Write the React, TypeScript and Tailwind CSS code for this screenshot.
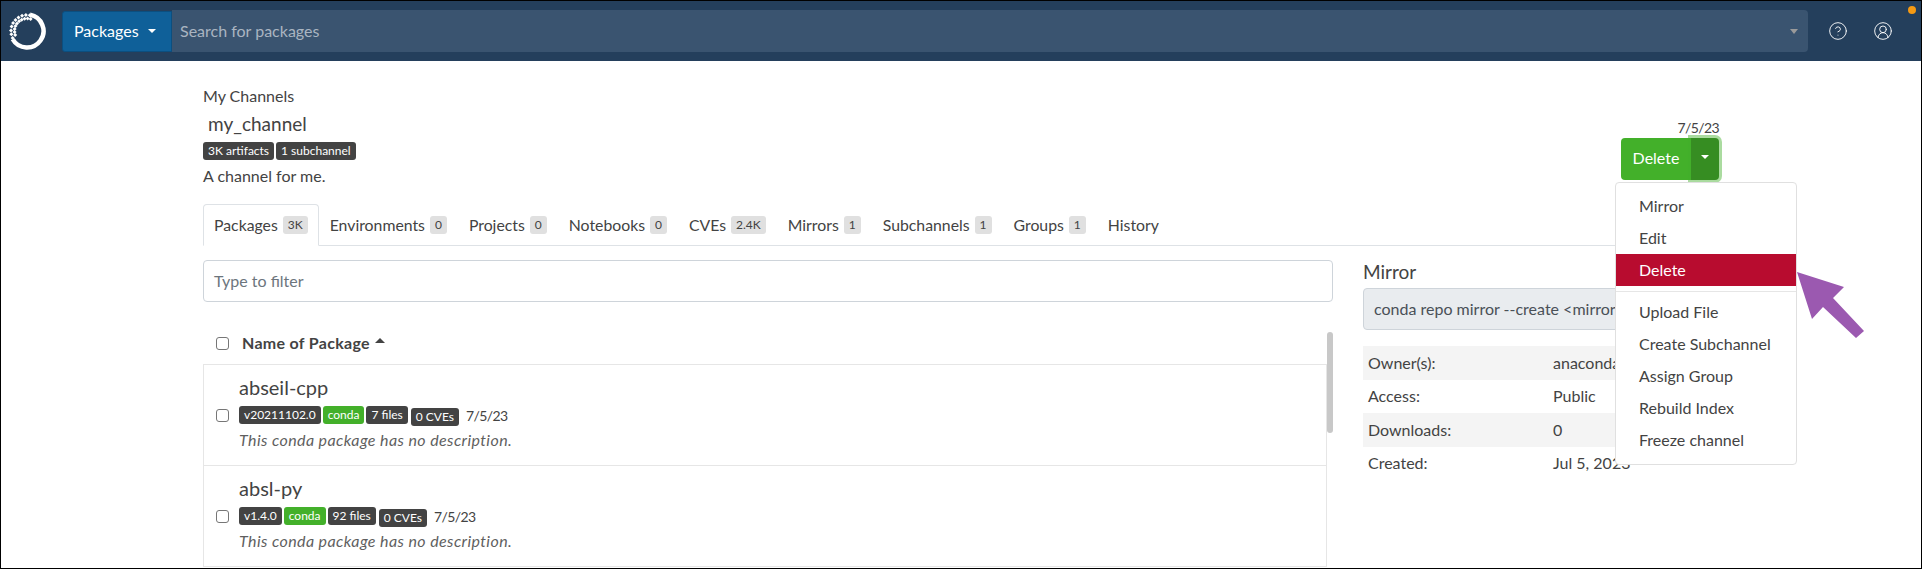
import { CircleHelp, CircleUserRound } from "lucide-react";

const tabs = [
  { label: "Packages", count: "3K" },
  { label: "Environments", count: "0" },
  { label: "Projects", count: "0" },
  { label: "Notebooks", count: "0" },
  { label: "CVEs", count: "2.4K" },
  { label: "Mirrors", count: "1" },
  { label: "Subchannels", count: "1" },
  { label: "Groups", count: "1" },
  { label: "History" },
];

const packages = [
  { name: "abseil-cpp", version: "v20211102.0", files: "7 files" },
  { name: "absl-py", version: "v1.4.0", files: "92 files" },
];

const details = [
  ["Owner(s):", "anaconda"],
  ["Access:", "Public"],
  ["Downloads:", "0"],
  ["Created:", "Jul 5, 2023"],
];

function Caret({ className }: { className: string }) {
  return <span className={`inline-block h-0 w-0 border-x-[4px] border-x-transparent ${className}`} />;
}

function Badge({ children, green }: { children: React.ReactNode; green?: boolean }) {
  return (
    <span
      className={`inline-flex h-[18px] items-center rounded-[3px] px-[5px] text-[12px] leading-none text-white ${
        green ? "bg-[#43b02a]" : "bg-[#434343]"
      }`}
    >
      {children}
    </span>
  );
}

function Check() {
  return <span className="block h-[13px] w-[13px] shrink-0 rounded-[3px] border border-[#767676] bg-white" />;
}

// ring with a netted section on the upper left
function Logo() {
  const diamonds: [number, number][] = [];
  for (let a = 154; a <= 292; a += 14) {
    const rad = (a * Math.PI) / 180;
    diamonds.push([19 + 16 * Math.cos(rad), 19 + 16 * Math.sin(rad)]);
    const rad2 = ((a + 7) * Math.PI) / 180;
    diamonds.push([19 + 12.5 * Math.cos(rad2), 19 + 12.5 * Math.sin(rad2)]);
  }
  return (
    <svg width="38" height="38" viewBox="0 0 38 38" fill="white" className="-mt-[1px]">
      <path d="M22 2.8a16.5 16.5 0 1 1-17.3 24.45" fill="none" stroke="white" strokeWidth="4.5" />
      {diamonds.map(([x, y], i) => (
        <path key={i} d={`M${x} ${y - 2}l2 2-2 2-2-2z`} />
      ))}
    </svg>
  );
}

export default function App() {
  return (
    <div className="relative h-[569px] w-[1922px] overflow-hidden border border-black bg-white font-['Lato',sans-serif] text-[16px] text-[#434343]">
      {/* Top bar */}
      <header className="flex h-[60px] items-center bg-[#243f5c]">
        <div className="ml-[7px] flex w-[54px] items-center">
          <Logo />
        </div>
        <button className="flex h-[41px] w-[110px] items-center gap-[9px] rounded-l-[3px] border border-[#0b4f80] bg-[#0f6099] pl-[11px] text-[16px] text-white">
          Packages
          <Caret className="border-t-[4px] border-t-white" />
        </button>
        <div className="flex h-[42px] w-[1636px] items-center justify-between rounded-r-[4px] bg-[#3a5470] pl-2 pr-[10px] text-[16px] text-[#aab5c1]">
          <span>Search for packages</span>
          <Caret className="border-t-[5px] border-t-[#9a9a9a]" />
        </div>
        <CircleHelp className="ml-[20px] h-[20px] w-[20px] text-white" strokeWidth={1.1} />
        <CircleUserRound className="ml-[25px] h-[20px] w-[20px] text-white" strokeWidth={1.1} />
        <span className="absolute right-[5px] top-[5px] h-2 w-2 rounded-full bg-[#f59a13]" />
      </header>

      <main className="pl-[202px] pr-[202px] pt-[24px]">
        {/* Channel heading */}
        <div className="flex w-[1516px] justify-between">
          <div>
            <div className="leading-[22px]">My Channels</div>
            <h1 className="ml-[5px] mt-[5px] text-[19px] leading-[24px]">my_channel</h1>
            <div className="mt-[6px] flex gap-[2px]">
              <Badge>3K artifacts</Badge>
              <Badge>1 subchannel</Badge>
            </div>
            <p className="mb-[1px] mt-[5px] leading-[22px]">A channel for me.</p>
          </div>
          <div className="flex flex-col items-end pt-[33px]">
            <div className="text-[14px] leading-[20px] tracking-[-0.6px]">7/5/23</div>
            <div className="flex h-[42px] text-[16px] text-white">
              <button className="w-[70px] rounded-l-[4px] bg-[#43b02a] pb-[2px]">Delete</button>
              <button className="flex w-[28px] items-center justify-center rounded-r-[4px] bg-[#368d22] pb-[4px] shadow-[0_0_0_3px_rgba(67,176,42,0.45)]">
                <Caret className="border-t-[4px] border-t-white" />
              </button>
            </div>
          </div>
        </div>

        {/* Tabs */}
        <nav className="mt-[16px] flex h-[42px] w-[1516px] border-b border-[#dee2e6] text-[15.8px]">
          {tabs.map((tab, i) => (
            <div
              key={tab.label}
              className={`flex h-[42px] items-center gap-[5px] rounded-t-[4px] border px-[10px] ${
                i === 0 ? "border-[#dee2e6] border-b-white" : "border-transparent"
              }`}
            >
              {tab.label}
              {tab.count && (
                <span className="flex h-[18px] items-center rounded-[3px] bg-[#e0e0e0] px-[5px] text-[12px]">
                  {tab.count}
                </span>
              )}
            </div>
          ))}
        </nav>

        <div className="mt-[14px] flex gap-[30px]">
          {/* Package list */}
          <section className="w-[1130px] shrink-0">
            <div className="flex h-[42px] items-center rounded-[4px] border border-[#ced4da] px-[10px] text-[#6c757d]">
              Type to filter
            </div>
            <div className="relative mt-[29px]">
              <div className="-mt-[3px] flex h-[36px] items-center pb-[6px] pl-[13px]">
                <Check />
                <span className="ml-[13px] font-bold tracking-[0.3px]">Name of Package</span>
                <Caret className="mb-[6px] ml-[5px] border-x-[5px] border-b-[5px] border-b-[#434343]" />
              </div>
              <span className="absolute right-0 top-[4px] h-[101px] w-[6px] rounded-[3px] bg-[#c8c8c8]" />
              <ul className="mr-[6px] border-l border-r border-t border-[#e6e6e6]">
                {packages.map((pkg) => (
                  <li key={pkg.name} className="flex h-[101px] border-b border-[#e6e6e6] pl-[12px] pt-[10px]">
                    <span className="mt-[34px]">
                      <Check />
                    </span>
                    <div className="ml-[10px]">
                      <div className="text-[20px] leading-[24px]">{pkg.name}</div>
                      <div className="mt-[4px] flex items-center gap-[2px]">
                        <Badge>{pkg.version}</Badge>
                        <Badge green>conda</Badge>
                        <Badge>{pkg.files}</Badge>
                        <span className="ml-[1px]">
                          <Badge>0 CVEs</Badge>
                        </span>
                        <span className="ml-[5px] text-[14px] tracking-[-0.6px]">7/5/23</span>
                      </div>
                      <p className="mt-[3px] text-[16px] italic leading-[20px] tracking-[0.4px] text-[#5f5f5f]">
                        This conda package has no description.
                      </p>
                    </div>
                  </li>
                ))}
              </ul>
            </div>
          </section>

          {/* Mirror details */}
          <aside className="w-[356px]">
            <h2 className="text-[19px] leading-[24px]">Mirror</h2>
            <div className="mt-[4px] flex h-[42px] items-center overflow-hidden whitespace-nowrap rounded-[4px] border border-[#ced4da] bg-[#e9ecef] px-[10px] text-[#495057]">
              conda repo mirror --create &lt;mirror_name&gt;
            </div>
            <table className="mt-[16px] w-full">
              <tbody>
                {details.map(([key, value], i) => (
                  <tr key={key} className={`h-[33.5px] ${i % 2 === 0 ? "bg-[#f4f4f4]" : ""}`}>
                    <td className="w-[190px] pl-[5px]">{key}</td>
                    <td>{value}</td>
                  </tr>
                ))}
              </tbody>
            </table>
          </aside>
        </div>
      </main>

      {/* Open dropdown */}
      <div className="absolute left-[1614px] top-[181px] w-[182px] rounded-[4px] border border-[#e0e0e0] bg-white pb-[8px] pt-[7px] text-[#434343]">
        {["Mirror", "Edit"].map((item) => (
          <div key={item} className="flex h-[32px] items-center pl-[23px]">{item}</div>
        ))}
        <div className="flex h-[32px] items-center bg-[#b80c2f] pl-[23px] text-white">Delete</div>
        <div className="mb-[4px] mt-[5px] border-t border-[#e6e6e6]" />
        {["Upload File", "Create Subchannel", "Assign Group", "Rebuild Index", "Freeze channel"].map((item) => (
          <div key={item} className="flex h-[32px] items-center pl-[23px]">{item}</div>
        ))}
      </div>

      {/* Annotation arrow */}
      <svg className="absolute left-[1790px] top-[265px]" width="80" height="80" viewBox="0 0 80 80">
        <path d="M6 6 L53 21 L42 32 L73 65 L65 72 L32 41 L21 53 Z" fill="#9b59b0" />
      </svg>
    </div>
  );
}
